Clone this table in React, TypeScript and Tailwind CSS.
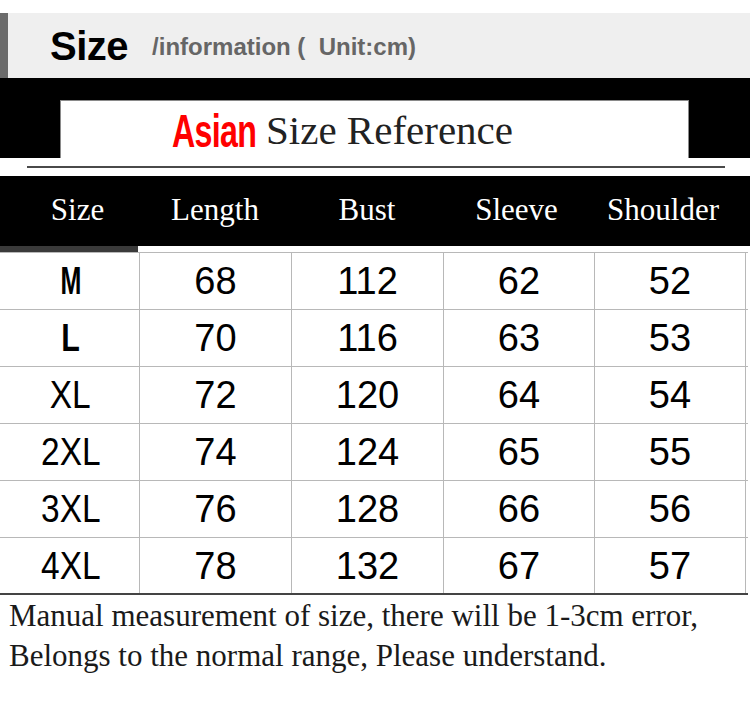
import React from 'react';

const cols = ['Size', 'Length', 'Bust', 'Sleeve', 'Shoulder'];

const rows = [
  ['M', '68', '112', '62', '52'],
  ['L', '70', '116', '63', '53'],
  ['XL', '72', '120', '64', '54'],
  ['2XL', '74', '124', '65', '55'],
  ['3XL', '76', '128', '66', '56'],
  ['4XL', '78', '132', '67', '57'],
];

// first column labels are narrower, the top two are bold
const sizeCls = [
  'font-bold scale-x-[0.66]',
  'font-bold scale-x-[0.8]',
  'scale-x-[0.88]',
  'scale-x-[0.88]',
  'scale-x-[0.88]',
  'scale-x-[0.88]',
];

const grid = 'grid grid-cols-[139px_152px_152px_151px_152px]';

export default function App() {
  return (
    <div className="w-[750px] h-[707px] bg-white overflow-hidden pt-[13px]">
      {/* Size / information header */}
      <div className="flex h-[65px]">
        <div className="w-[8px] bg-[#6b6b6b]" />
        <div className="flex-1 bg-[#efefef] flex items-center pl-[42px] pt-[1px] font-['Liberation_Sans',sans-serif]">
          <span className="text-[40px] font-bold text-black tracking-[-0.5px]">Size</span>
          <span className="ml-[24px] mt-[2px] text-[24px] font-bold text-[#666]">
            /information (&nbsp; Unit:cm)
          </span>
        </div>
      </div>

      {/* Asian size reference band */}
      <div className="bg-black pt-[22px] pl-[60px] pr-[61px]">
        <div className="h-[58px] bg-white border border-[#8a8a8a] border-b-0 flex items-center pl-[111px] pt-[2px]">
          <span className="inline-block w-[94px]">
            <span className="inline-block origin-left scale-x-[0.7] text-[46px] leading-none font-bold text-[#ff0000] font-['Liberation_Sans',sans-serif] tracking-[-1px]">
              Asian
            </span>
          </span>
          <span className="text-[41px] leading-none text-[#222] font-['Liberation_Serif',serif]">
            Size Reference
          </span>
        </div>
      </div>
      <div className="h-[18px] bg-white px-[27px] pt-[8px]">
        <div className="w-[698px] h-[2px] bg-[#4a4a4a]" />
      </div>

      {/* Table header */}
      <div className={`${grid} bg-black h-[70px] text-white font-['Liberation_Serif',serif] text-[31px]`}>
        {cols.map((c, j) => (
          <div
            key={c}
            className={`flex items-center justify-center pb-[2px] ${j === 0 ? 'pl-[16px]' : ''} ${j === 3 ? 'pr-[4px]' : ''} ${j === 4 ? 'pr-[14px]' : ''}`}
          >
            {c}
          </div>
        ))}
      </div>
      <div className="h-[6px] flex">
        <div className="w-[138px] bg-[#3a3a3a]" />
      </div>

      {/* Table body */}
      <div className="border-t border-[#b8b8b8] w-[748px]">
        {rows.map((r, i) => (
          <div
            key={r[0]}
            className={`${grid} h-[57px] border-b ${i === rows.length - 1 ? 'border-b-2 border-[#444]' : 'border-[#b8b8b8]'}`}
          >
            {r.map((v, j) => (
              <div
                key={j}
                className={`flex items-center justify-center text-[38px] leading-none text-black font-['Liberation_Sans',sans-serif] ${j > 0 ? 'border-l border-[#b8b8b8]' : 'pl-[2px]'} ${j === 4 ? 'border-r border-[#b8b8b8]' : ''}`}
              >
                {j === 0 ? <span className={`inline-block ${sizeCls[i]}`}>{v}</span> : v}
              </div>
            ))}
          </div>
        ))}
      </div>

      {/* Note */}
      <div className="pl-[9px] pt-[1px] text-[31px] leading-[40px] text-[#1a1a1a] font-['Liberation_Serif',serif]">
        <p>Manual measurement of size, there will be 1-3cm error,</p>
        <p>Belongs to the normal range, Please understand.</p>
      </div>
    </div>
  );
}
